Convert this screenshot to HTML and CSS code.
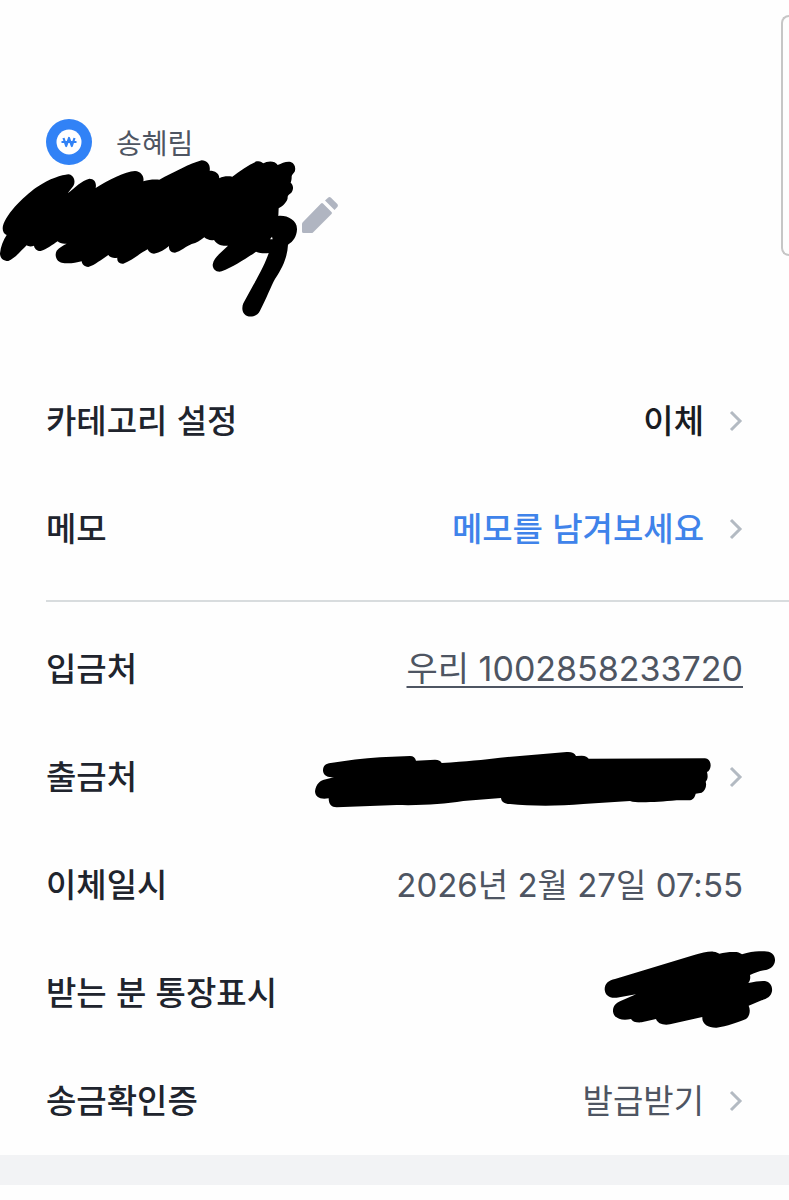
FILE: index.html
```html
<!DOCTYPE html>
<html lang="ko">
<head>
<meta charset="utf-8">
<meta name="viewport" content="width=device-width, initial-scale=1">
<title>이체 상세</title>
<link rel="stylesheet" href="styles.css">
</head>
<body>
<header class="header">
  <div class="summary">
    <div class="sender">
      <svg class="avatar" viewBox="0 0 46 46" aria-hidden="true">
        <circle cx="23" cy="23" r="23" fill="#3182f6"/>
        <circle cx="23" cy="23" r="12.5" fill="#fff"/>
        <path d="M17.500 19l2.700 8 2.800-8 2.800 8 2.700-8M15.500 23h15" fill="none" stroke="#3182f6" stroke-width="2.200" stroke-linejoin="round"/>
      </svg>
      <span class="name">송혜림</span>
    </div>
    <div class="amount">
      <svg class="amount-mask" viewBox="0 180 900 480" aria-hidden="true">
        <path d="M8 385C10 350 70 290 110 262C150 235 185 225 205 223C222 225 228 245 220 258L203 280C225 262 245 242 268 236C285 236 290 250 287 264C325 240 375 215 405 213C425 215 433 230 430 244C445 240 455 238 478 239C520 218 570 190 605 181C622 181 632 195 629 212C645 212 658 220 658 235C670 228 685 228 697 230C720 212 745 195 770 184C780 182 786 186 790 190C800 183 825 180 833 195C845 190 860 183 872 186C885 190 888 205 884 215C880 220 874 225 875 232C875 240 873 245 872 248C880 254 882 268 874 278C866 284 862 286 863 294C862 304 850 318 836 325L835 348C860 345 892 360 891 388C890 410 880 425 864 434C862 470 850 500 825 537C812 560 800 595 780 632C770 652 745 655 733 642C725 632 726 620 730 610L760 555C780 520 800 480 806 459C795 461 780 460 768 455C740 475 700 500 665 514C650 518 638 508 638 494C640 480 650 470 660 460L684 437C670 438 655 438 642 420C630 422 620 418 613 412C600 422 590 430 575 432C560 438 540 455 525 458C512 458 506 450 507 438C495 448 480 458 462 461C452 461 446 455 443 448C420 460 395 482 370 491C358 493 350 485 352 473C343 475 332 474 325 465C305 478 285 495 265 501C252 500 246 492 245 484C225 490 200 492 185 488C168 484 163 465 170 452C178 443 190 435 200 431C190 433 178 430 173 424C158 434 140 448 122 453C110 453 103 445 102 437C95 440 85 440 80 436C65 450 45 475 25 483C10 483 0 475 0 460C2 440 10 420 20 405C12 402 8 395 8 385Z"/>
        <path d="M810 418l6-8 2 8z" fill="#fff"/>
      </svg>
      <button class="edit" type="button" aria-label="금액 편집">
        <svg viewBox="0 0 36 36" aria-hidden="true">
          <path d="M19 6.500Q20 5.500 21 6.500L29.500 15Q30.500 16 29.500 17L11 35.500Q10.500 36 9.500 36H1.500Q0 36 0 34.500V27Q0 26 1 25Z"/>
          <path d="M23 3.500L26 .7Q27.500-.5 29 .7L35.300 7Q36.500 8.500 35.300 10L32.500 13Z"/>
        </svg>
      </button>
    </div>
  </div>
  <div class="next-card"></div>
</header>

<main>
  <section class="rows">
    <div class="row">
      <span class="label">카테고리 설정</span>
      <button class="value strong" type="button">이체<svg class="chevron" viewBox="0 0 14 22" aria-hidden="true"><path d="M2 2l9 9-9 9"/></svg></button>
    </div>
    <div class="row">
      <span class="label">메모</span>
      <button class="value" type="button"><span class="memo">메모를 남겨보세요</span><svg class="chevron" viewBox="0 0 14 22" aria-hidden="true"><path d="M2 2l9 9-9 9"/></svg></button>
    </div>
  </section>
  <hr class="divider">
  <section class="rows">
    <div class="row">
      <span class="label">입금처</span>
      <a class="value account" href="#">우리 1002858233720</a>
    </div>
    <div class="row">
      <span class="label">출금처</span>
      <button class="value" type="button" aria-label="출금처">
        <svg class="source-mask" viewBox="45 21 1188 186" aria-hidden="true">
          <path d="M69 94C69 80 78 73 92 72C140 65 190 58 240 55L330 51C340 51 346 57 348 65L405 62C416 62 423 66 425 72C500 67 550 62 600 56L800 39C815 38 824 42 828 51L845 50C857 50 863 55 866 59L1215 58C1226 59 1232 67 1232 80C1231 90 1227 96 1221 99C1224 110 1224 120 1217 128C1221 140 1216 155 1205 161L1187 164C1185 175 1178 184 1166 184L1130 184C1090 188 1060 190 1025 190C1010 190 1000 189 990 186L850 195C770 202 690 201 630 195C612 195 604 188 603 177L490 186C430 195 370 200 290 198L110 205C94 205 86 196 86 178C60 182 46 175 45 157C48 135 60 124 78 121L104 114C82 118 69 108 69 94Z"/>
        </svg><svg class="chevron" viewBox="0 0 14 22" aria-hidden="true"><path d="M2 2l9 9-9 9"/></svg></button>
    </div>
    <div class="row">
      <span class="label">이체일시</span>
      <time class="value" datetime="2026-02-27T07:55">2026년 2월 27일 07:55</time>
    </div>
    <div class="row">
      <span class="label">받는 분 통장표시</span>
      <span class="value">
        <svg class="display-mask" viewBox="72 60 516 258" aria-hidden="true">
          <path d="M74 178C74 160 87 150 105 147L340 76C365 68 385 64 400 65C410 66 415 69 418 71C435 66 455 65 470 66C479 68 483 71 486 73C510 65 530 62 548 64C570 62 586 72 585 92C583 108 572 116 558 120C540 123 525 128 510 135C512 145 510 153 505 159C525 155 540 152 555 153C570 156 578 168 576 184C573 200 560 207 545 211L506 227C512 240 510 258 498 267C475 277 440 289 410 293C385 294 365 282 367 261L270 283C250 287 232 280 228 267L185 277C170 278 157 276 153 267C125 274 102 265 99 245C98 228 108 220 120 214L168 193L110 203C90 206 75 197 74 178Z"/>
        </svg>
      </span>
    </div>
    <div class="row">
      <span class="label">송금확인증</span>
      <button class="value" type="button">발급받기<svg class="chevron" viewBox="0 0 14 22" aria-hidden="true"><path d="M2 2l9 9-9 9"/></svg></button>
    </div>
  </section>
</main>
<div class="band"></div>
</body>
</html>
```
FILE: styles.css
```css
* {
  box-sizing: border-box;
}

body {
  margin: 0;
  background: #fefefe;
  color: #4e5562;
  font-family: Inter, "Noto Sans CJK KR", sans-serif;
  font-size: 33px;
  line-height: 48px;
  overflow-x: hidden;
}

button {
  border: 0;
  padding: 0;
  background: none;
  font: inherit;
  color: inherit;
  cursor: pointer;
}

.header {
  display: flex;
  justify-content: space-between;
  align-items: flex-start;
  padding: 15px 0 50px;
}

.summary {
  padding-top: 104px;
}

.sender {
  display: flex;
  align-items: center;
  gap: 24px;
  padding-left: 46px;
  height: 46px;
}

.avatar {
  width: 46px;
  height: 46px;
}

.name {
  font-family: "Noto Sans CJK KR", sans-serif;
  font-size: 28px;
}

.amount {
  position: relative;
  display: flex;
  height: 152px;
  padding: 32px 0 0 302px;
}

.amount-mask {
  position: absolute;
  left: 0;
  top: -5px;
  width: 300px;
  height: 160px;
}

.edit {
  width: 36px;
  height: 36px;
}

.edit svg {
  display: block;
  fill: #b0b5c1;
}

.next-card {
  width: 8px;
  height: 241px;
  border: 2px solid #c6c6c6;
  border-right: 0;
  border-radius: 10px 0 0 10px;
}

.rows {
  padding: 0 46px;
}

.row {
  display: flex;
  align-items: center;
  justify-content: space-between;
  height: 108px;
}

.label,
.memo {
  padding-bottom: 4px;
  font-family: "Noto Sans CJK KR", sans-serif;
  font-weight: 500;
}

.label {
  color: #20242d;
}

.memo {
  color: #3f83ea;
}

.value {
  display: flex;
  align-items: center;
}

.strong {
  color: #191c22;
  font-weight: 500;
}

.account {
  color: inherit;
  font-size: 34px;
  text-decoration: underline;
  text-decoration-thickness: 2px;
  text-underline-offset: 5px;
}

.chevron {
  width: 14px;
  height: 22px;
  margin-left: 25px;
  fill: none;
  stroke: #b3bac2;
  stroke-width: 3;
}

.source-mask {
  width: 396px;
  height: 62px;
  margin-right: -7px;
}

.display-mask {
  width: 172px;
  height: 86px;
  margin-right: -33px;
}

.divider {
  height: 2px;
  margin: 17px 0 13px 46px;
  border: 0;
  background: #d8dcde;
}

.band {
  height: 30px;
  background: #f2f3f5;
}
```
